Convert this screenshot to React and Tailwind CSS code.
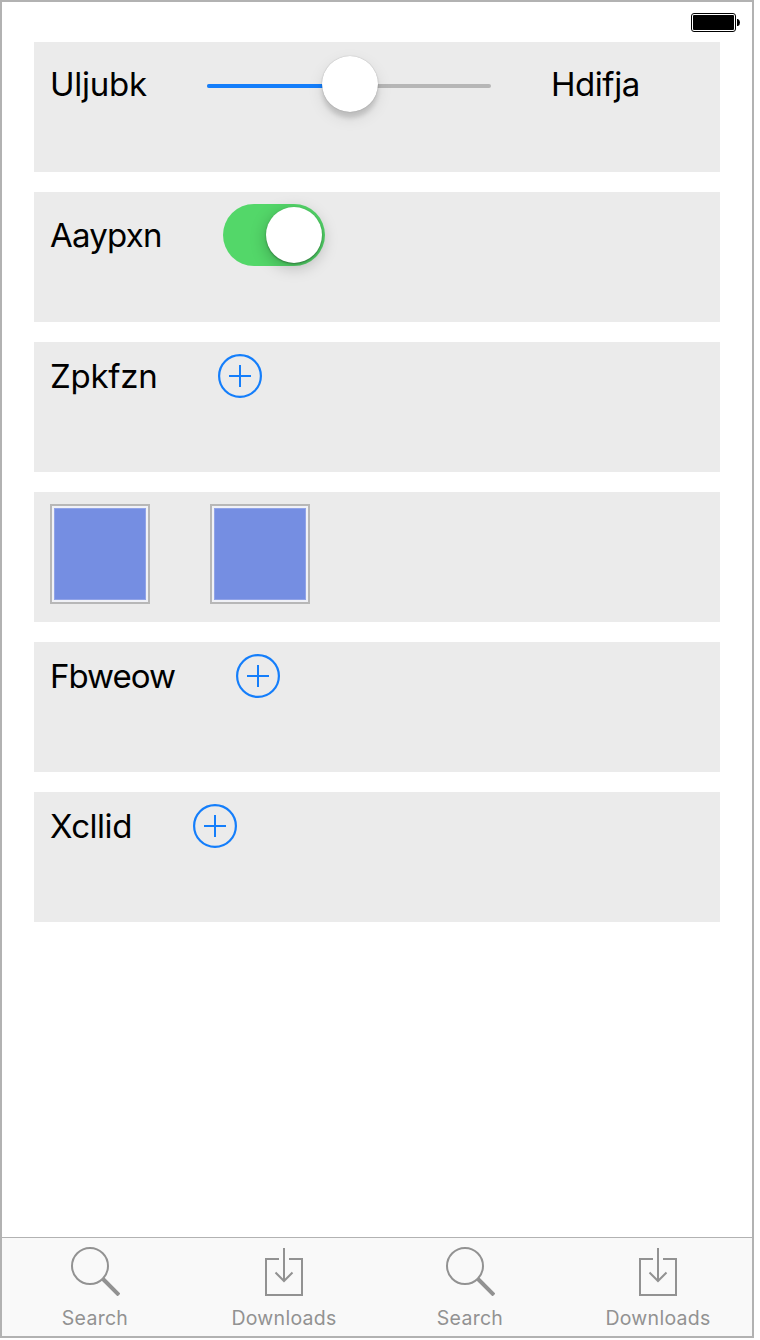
function Row({ children }) {
  return (
    <div className="flex h-[130px] shrink-0 items-start bg-[#ebebeb] px-4 pt-3">
      <div className="flex items-center gap-[60px]">{children}</div>
    </div>
  );
}

function Label({ children, className = "" }) {
  return (
    <span className={`shrink-0 whitespace-nowrap text-[33px] leading-10 text-black ${className}`}>
      {children}
    </span>
  );
}

function Slider() {
  return (
    <div className="relative flex h-[60px] w-[284px] items-center">
      <div className="mt-1 flex h-1 w-full overflow-hidden rounded-full bg-[#b6b6b6]">
        <div className="h-full w-1/2 bg-[#147efb]" />
      </div>
      <div className="absolute top-0.5 left-[115px] size-14 rounded-full bg-white shadow-[0_0_1px_rgba(0,0,0,0.35),0_6px_4px_rgba(0,0,0,0.13),0_6px_16px_rgba(0,0,0,0.1)]" />
    </div>
  );
}

function Toggle() {
  return (
    <div className="flex h-[62px] w-[102px] items-center justify-end rounded-full bg-[#53d769] pr-[3px]">
      <div className="size-14 rounded-full bg-white shadow-[0_1px_2px_rgba(0,0,0,0.35),0_4px_16px_rgba(0,0,0,0.25)]" />
    </div>
  );
}

function AddButton() {
  return (
    <svg className="size-11" viewBox="0 0 44 44" fill="none" stroke="#147efb" strokeWidth="2">
      <circle cx="22" cy="22" r="20.9" strokeWidth="2.2" />
      <path d="M22 11v22M11 22h22" />
    </svg>
  );
}

function Swatch() {
  return (
    <div className="size-[100px] border-2 border-[#b7b7b7] bg-[#f0f1f6] p-0.5">
      <div className="size-full border border-[#91a3e7] bg-[#758ee2]" />
    </div>
  );
}

function SearchIcon() {
  return (
    <svg className="h-[50px] w-[50px]" viewBox="0 0 50 50" fill="none" stroke="#929292">
      <circle cx="20" cy="20" r="18" strokeWidth="2" />
      <path d="M32.5 32.5L49 49" strokeWidth="4" />
    </svg>
  );
}

function DownloadIcon() {
  return (
    <svg className="h-[50px] w-[38px]" viewBox="0 0 38 50" fill="none" stroke="#929292" strokeWidth="2">
      <path d="M14 13H1v36h36V13H24M19 2v32M10.5 26.5l8.5 8.5 8.5-8.5" />
    </svg>
  );
}

function Tab({ icon, label, className = "" }) {
  return (
    <div className={`flex w-1/4 flex-col items-center pt-2 ${className}`}>
      {icon}
      <span className="mt-2.5 whitespace-nowrap text-[19.5px] leading-6 tracking-[0.28px] text-[#929292]">{label}</span>
    </div>
  );
}

export default function App() {
  return (
    <div className="h-[1340px] w-[760px] bg-white font-[Inter,sans-serif]">
      <div className="flex h-[1338px] w-[754px] flex-col border-2 border-[#b2b2b2]">
        <div className="flex h-10 shrink-0 items-start justify-end pt-[11px] pr-3">
          <svg className="h-[19px] w-[49px]" viewBox="0 0 49 19">
            <rect x="0.5" y="0.5" width="44" height="18" rx="2.5" fill="white" stroke="black" />
            <rect x="2" y="2" width="41" height="15" rx="1" fill="black" />
            <path d="M46 6h1q2 1 2 3.5T47 13h-1z" fill="black" />
          </svg>
        </div>
        <div className="flex flex-1 flex-col gap-5 pr-8 pl-8">
          <Row>
            <Label className="w-[97px] tracking-[-0.25px]">Uljubk</Label>
            <Slider />
            <Label className="tracking-[-0.45px]">Hdifja</Label>
          </Row>
          <Row>
            <Label className="w-[113px] tracking-[-0.75px]">Aaypxn</Label>
            <Toggle />
          </Row>
          <Row>
            <Label className="w-[108px] tracking-[-0.25px]">Zpkfzn</Label>
            <AddButton />
          </Row>
          <Row>
            <Swatch />
            <Swatch />
          </Row>
          <Row>
            <Label className="w-[126px] tracking-[-1px]">Fbweow</Label>
            <AddButton />
          </Row>
          <Row>
            <Label className="w-[83px] tracking-[-0.45px]">Xcllid</Label>
            <AddButton />
          </Row>
        </div>
        <div className="flex h-[99px] shrink-0 border-t border-[#b2b2b2] bg-[#f9f9f9]">
          <Tab icon={<SearchIcon />} label="Search" className="pr-[1.5px]" />
          <Tab icon={<DownloadIcon />} label="Downloads" className="pl-[1.5px]" />
          <Tab icon={<SearchIcon />} label="Search" className="pr-[1.5px]" />
          <Tab icon={<DownloadIcon />} label="Downloads" className="pr-[0.5px]" />
        </div>
      </div>
    </div>
  );
}
